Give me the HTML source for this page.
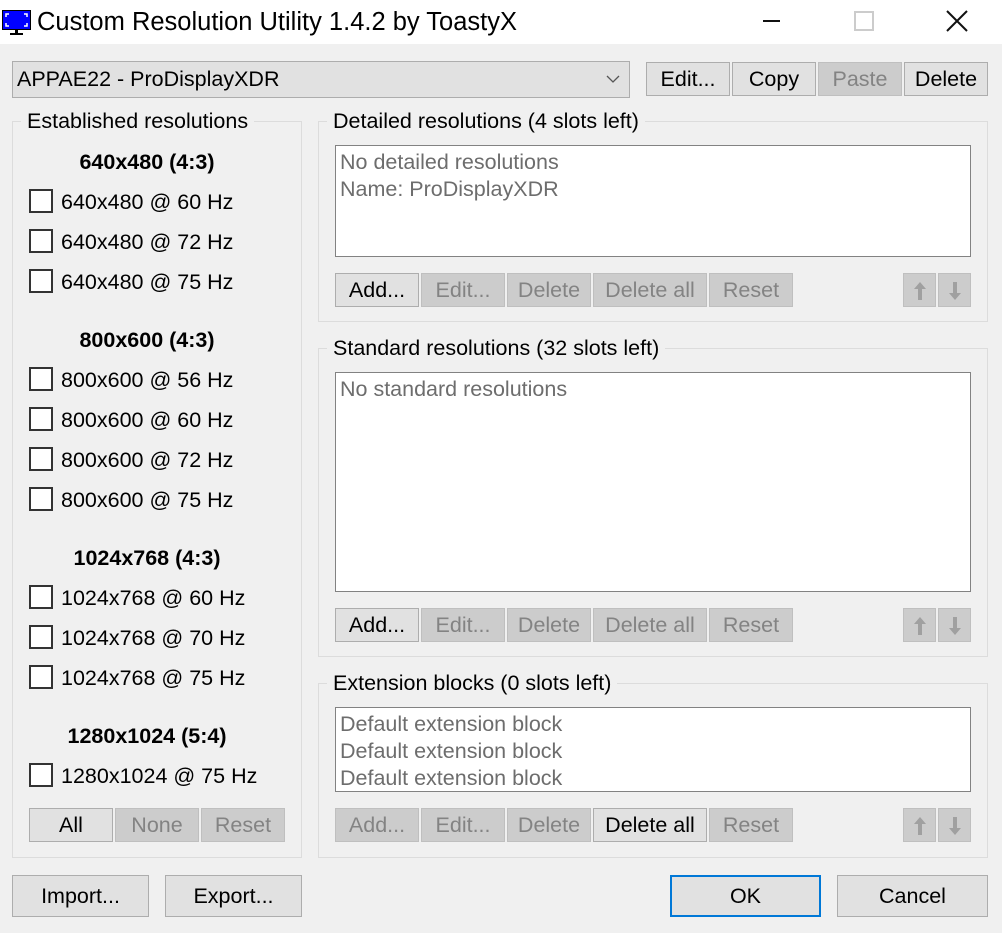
<!DOCTYPE html>
<html><head><meta charset="utf-8"><style>
*{box-sizing:border-box;margin:0;padding:0}
body{width:1002px;height:933px;background:#f0f0f0;font-family:"Liberation Sans",sans-serif;font-size:21.5px;color:#000;position:relative;overflow:hidden}
.a{position:absolute}
.tb{left:0;top:0;width:1002px;height:44px;background:#fff}
.btn{position:absolute;background:#e1e1e1;border:1px solid #adadad;display:flex;align-items:center;justify-content:center;height:34px}
.dis{background:#cccccc;border-color:#bfbfbf;color:#838383}
.gb{position:absolute;border:1px solid #dcdcdc}
.gt{position:absolute;background:#f0f0f0;padding:0 6px;top:-13px;left:8px;line-height:24px;white-space:nowrap}
.list{position:absolute;background:#fff;border:1px solid #828282;color:#6d6d6d;padding:3px 4px;line-height:27px}
.cb{position:absolute;width:24px;height:24px;border:2px solid #333;background:#fff}
.lb{position:absolute;white-space:nowrap;line-height:24px}
.hd{position:absolute;font-weight:bold;width:270px;text-align:center;line-height:24px}
.arr{position:absolute;width:33px;height:34px;background:#cccccc;border:1px solid #bfbfbf}
</style></head><body>
<div class="a tb"></div>
<svg class="a" style="left:2px;top:10px" width="30" height="26" viewBox="0 0 30 26"><rect x="0.5" y="0.5" width="28" height="19" fill="#0000ff" stroke="#000"/><path d="M4 7V4h3M22 4h3v3M4 13v3h3M22 16h3v-3" stroke="#fff" stroke-width="1.5" fill="none"/><rect x="13" y="20" width="3" height="3"/><rect x="8" y="23" width="13" height="2"/></svg>
<div class="a" style="left:37px;top:7px;font-size:25.5px;line-height:30px">Custom Resolution Utility 1.4.2 by ToastyX</div>
<div class="a" style="left:763px;top:20px;width:17px;height:2px;background:#111"></div>
<div class="a" style="left:854px;top:11px;width:20px;height:20px;border:2px solid #ccc"></div>
<svg class="a" style="left:946px;top:10px" width="22" height="22"><path d="M1 1L21 21M21 1L1 21" stroke="#111" stroke-width="2"/></svg>

<div class="a" style="left:12px;top:61px;width:618px;height:37px;background:#e1e1e1;border:1px solid #adadad;padding-left:4px;line-height:35px">APPAE22 - ProDisplayXDR</div>
<svg class="a" style="left:606px;top:74px" width="14" height="10"><path d="M1 2L7 8L13 2" stroke="#555" stroke-width="1.3" fill="none"/></svg>
<div class="btn" style="left:646px;top:62px;width:84px">Edit...</div>
<div class="btn" style="left:732px;top:62px;width:84px">Copy</div>
<div class="btn dis" style="left:818px;top:62px;width:84px">Paste</div>
<div class="btn" style="left:904px;top:62px;width:84px">Delete</div>

<div class="gb" style="left:12px;top:121px;width:290px;height:737px"><div class="gt">Established resolutions</div></div>
<div class="hd" style="left:12px;top:150px">640x480 (4:3)</div>
<div class="cb" style="left:29px;top:189px"></div><div class="lb" style="left:61px;top:190px">640x480 @ 60 Hz</div>
<div class="cb" style="left:29px;top:229px"></div><div class="lb" style="left:61px;top:230px">640x480 @ 72 Hz</div>
<div class="cb" style="left:29px;top:269px"></div><div class="lb" style="left:61px;top:270px">640x480 @ 75 Hz</div>
<div class="hd" style="left:12px;top:328px">800x600 (4:3)</div>
<div class="cb" style="left:29px;top:367px"></div><div class="lb" style="left:61px;top:368px">800x600 @ 56 Hz</div>
<div class="cb" style="left:29px;top:407px"></div><div class="lb" style="left:61px;top:408px">800x600 @ 60 Hz</div>
<div class="cb" style="left:29px;top:447px"></div><div class="lb" style="left:61px;top:448px">800x600 @ 72 Hz</div>
<div class="cb" style="left:29px;top:487px"></div><div class="lb" style="left:61px;top:488px">800x600 @ 75 Hz</div>
<div class="hd" style="left:12px;top:546px">1024x768 (4:3)</div>
<div class="cb" style="left:29px;top:585px"></div><div class="lb" style="left:61px;top:586px">1024x768 @ 60 Hz</div>
<div class="cb" style="left:29px;top:625px"></div><div class="lb" style="left:61px;top:626px">1024x768 @ 70 Hz</div>
<div class="cb" style="left:29px;top:665px"></div><div class="lb" style="left:61px;top:666px">1024x768 @ 75 Hz</div>
<div class="hd" style="left:12px;top:724px">1280x1024 (5:4)</div>
<div class="cb" style="left:29px;top:763px"></div><div class="lb" style="left:61px;top:764px">1280x1024 @ 75 Hz</div>
<div class="btn" style="left:29px;top:808px;width:84px">All</div>
<div class="btn dis" style="left:115px;top:808px;width:84px">None</div>
<div class="btn dis" style="left:201px;top:808px;width:84px">Reset</div>

<div class="gb" style="left:318px;top:121px;width:670px;height:201px"><div class="gt">Detailed resolutions (4 slots left)</div></div>
<div class="list" style="left:335px;top:145px;width:636px;height:112px">No detailed resolutions<br>Name: ProDisplayXDR</div>
<div class="btn" style="left:335px;top:273px;width:84px">Add...</div>
<div class="btn dis" style="left:421px;top:273px;width:84px">Edit...</div>
<div class="btn dis" style="left:507px;top:273px;width:84px">Delete</div>
<div class="btn dis" style="left:593px;top:273px;width:114px">Delete all</div>
<div class="btn dis" style="left:709px;top:273px;width:84px">Reset</div>

<div class="gb" style="left:318px;top:348px;width:670px;height:309px"><div class="gt">Standard resolutions (32 slots left)</div></div>
<div class="list" style="left:335px;top:372px;width:636px;height:220px">No standard resolutions</div>
<div class="btn" style="left:335px;top:608px;width:84px">Add...</div>
<div class="btn dis" style="left:421px;top:608px;width:84px">Edit...</div>
<div class="btn dis" style="left:507px;top:608px;width:84px">Delete</div>
<div class="btn dis" style="left:593px;top:608px;width:114px">Delete all</div>
<div class="btn dis" style="left:709px;top:608px;width:84px">Reset</div>

<div class="gb" style="left:318px;top:683px;width:670px;height:175px"><div class="gt">Extension blocks (0 slots left)</div></div>
<div class="list" style="left:335px;top:707px;width:636px;height:85px">Default extension block<br>Default extension block<br>Default extension block</div>
<div class="btn dis" style="left:335px;top:808px;width:84px">Add...</div>
<div class="btn dis" style="left:421px;top:808px;width:84px">Edit...</div>
<div class="btn dis" style="left:507px;top:808px;width:84px">Delete</div>
<div class="btn" style="left:593px;top:808px;width:114px">Delete all</div>
<div class="btn dis" style="left:709px;top:808px;width:84px">Reset</div>

<svg width="0" height="0" style="position:absolute"><defs><g id="up"><path d="M16 8L10 15H14V26H18V15H22Z" fill="#a0a0a0"/></g><g id="dn"><path d="M16 26L10 19H14V8H18V19H22Z" fill="#a0a0a0"/></g></defs></svg>
<div class="arr" style="left:903px;top:273px"><svg width="33" height="34"><use href="#up"/></svg></div>
<div class="arr" style="left:938px;top:273px"><svg width="33" height="34"><use href="#dn"/></svg></div>
<div class="arr" style="left:903px;top:608px"><svg width="33" height="34"><use href="#up"/></svg></div>
<div class="arr" style="left:938px;top:608px"><svg width="33" height="34"><use href="#dn"/></svg></div>
<div class="arr" style="left:903px;top:808px"><svg width="33" height="34"><use href="#up"/></svg></div>
<div class="arr" style="left:938px;top:808px"><svg width="33" height="34"><use href="#dn"/></svg></div>

<div class="btn" style="left:12px;top:875px;width:137px;height:42px">Import...</div>
<div class="btn" style="left:165px;top:875px;width:137px;height:42px">Export...</div>
<div class="btn" style="left:670px;top:875px;width:151px;height:42px;border:2px solid #0078d7">OK</div>
<div class="btn" style="left:837px;top:875px;width:151px;height:42px">Cancel</div>
</body></html>
